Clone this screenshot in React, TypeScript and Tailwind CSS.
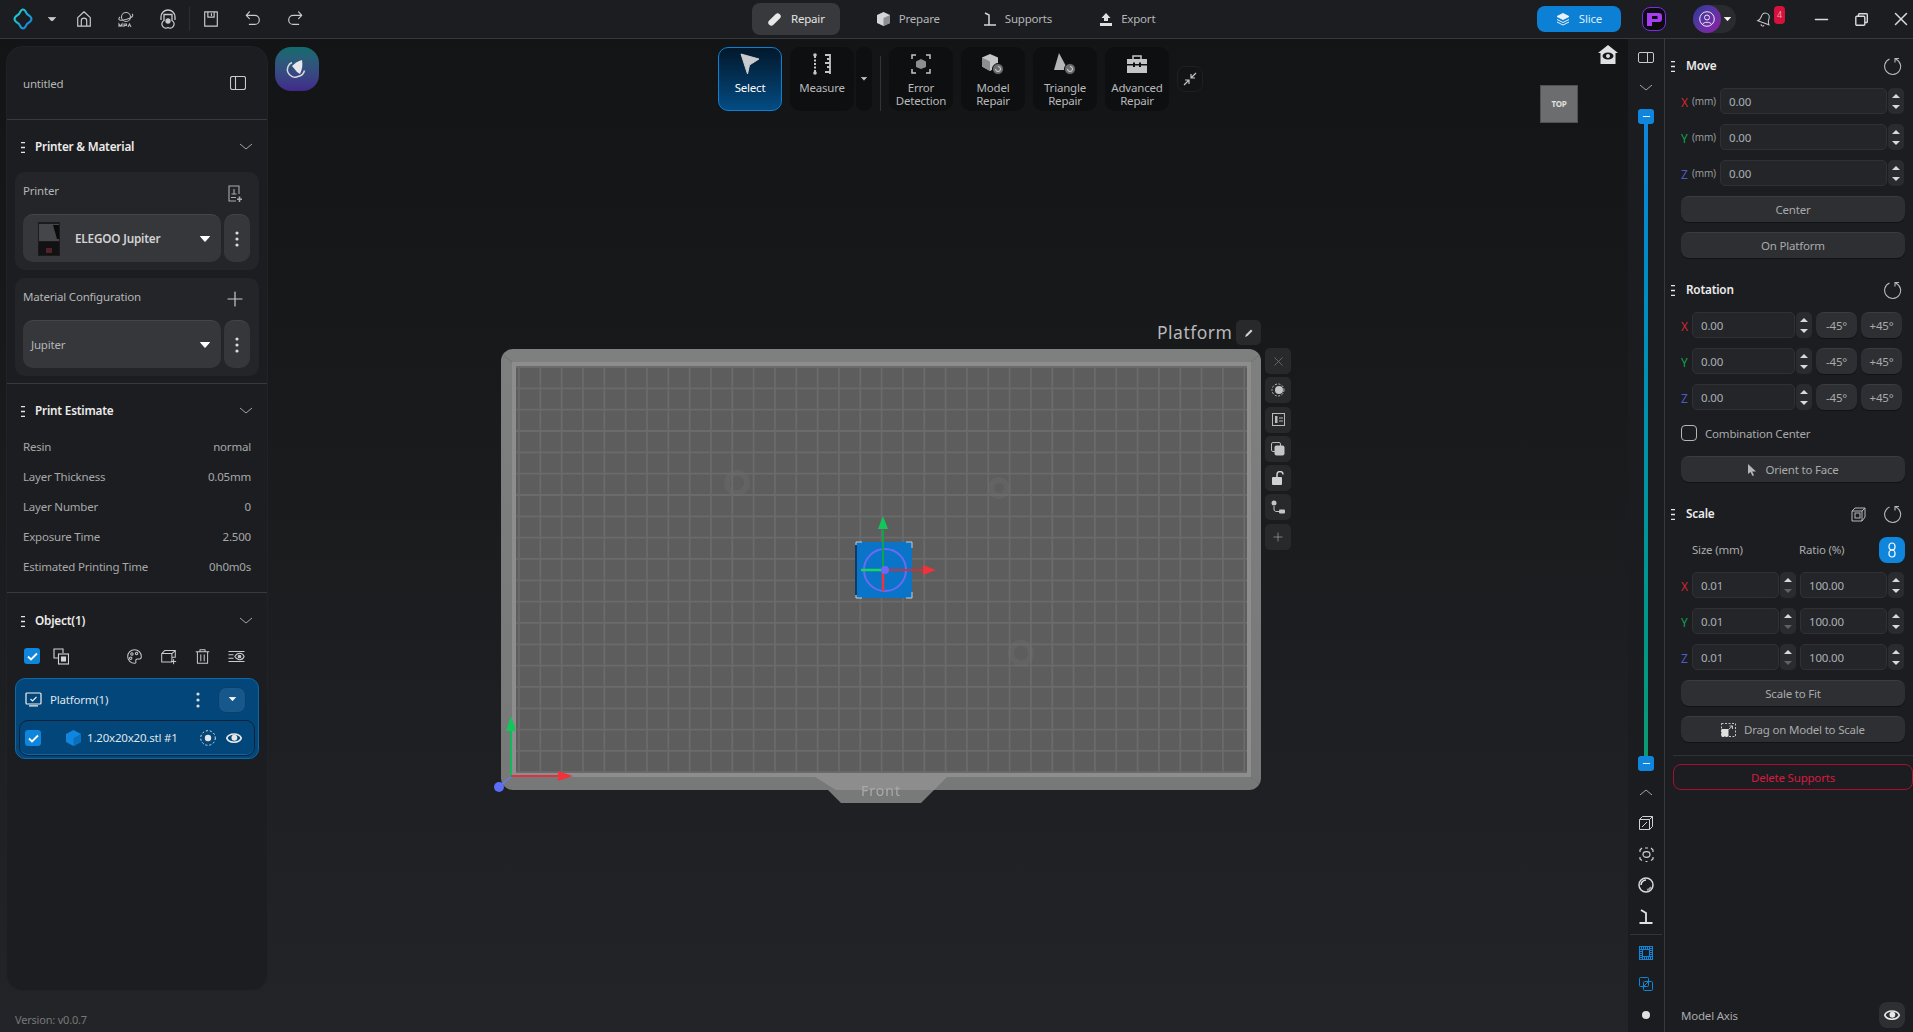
import React from 'react';
import { Minus, Plus, X } from 'lucide-react';

const Grip = () => (
    <svg width="4" height="11" viewBox="0 0 4 11" className="shrink-0">
        <path d="M0 0.5h4M0 5.5h4M0 10.5h4" stroke="#e5e5e5" strokeWidth="1.4" />
    </svg>
);

const Chevron = ({ up = false }: { up?: boolean }) => (
    <svg width="14" height="8" viewBox="0 0 14 8" className="shrink-0">
        <path d={up ? 'M1 7l6-5 6 5' : 'M1 1l6 5 6-5'} fill="none" stroke="#a3a4a6" strokeWidth="1" />
    </svg>
);

const Caret = ({ color = '#ffffff', size = 10 }: { color?: string; size?: number }) => (
    <svg width={size} height={size * 0.6} viewBox="0 0 10 6" className="shrink-0">
        <path d="M0.5 0.5h9L5 5.5z" fill={color} stroke={color} strokeLinejoin="round" />
    </svg>
);

const Kebab = () => (
    <svg width="4" height="16" viewBox="0 0 4 16">
        <circle cx="2" cy="2" r="1.6" fill="#dcdcdc" />
        <circle cx="2" cy="8" r="1.6" fill="#dcdcdc" />
        <circle cx="2" cy="14" r="1.6" fill="#dcdcdc" />
    </svg>
);

const EyeIcon = ({ w = 16 }: { w?: number }) => (
    <svg width={w} height={w * 0.64} viewBox="0 0 22 14" className="shrink-0">
        <path d="M1 7c3-7.500 17-7.500 20 0-3 7.500-17 7.500-20 0z" fill="none" stroke="#e8e8e8" strokeWidth="2.200" />
        <circle cx="11.500" cy="6.500" r="4" fill="#e8e8e8" />
    </svg>
);

const Reset = () => (
    <svg width="18" height="18" viewBox="0 0 18 18" fill="none" stroke="#b8b9bb" strokeWidth="1.1">
        <path d="M11.5 2A8 8 0 1 1 5.5 2.1" />
        <path d="M11 5.5V1.5H15" />
    </svg>
);

const Check = () => (
    <div className="flex h-4 w-4 shrink-0 items-center justify-center rounded-[3px] bg-[#0f85dc]">
        <svg width="11" height="9" viewBox="0 0 11 9">
            <path d="M1 4.5l3 3 6-6" fill="none" stroke="#fff" strokeWidth="1.8" />
        </svg>
    </div>
);

const Stroke = ({ children, size = 20, color = '#c9cacc', sw = 1.3 }: { children: React.ReactNode; size?: number; color?: string; sw?: number }) => (
    <svg width={size} height={size} viewBox="0 0 20 20" fill="none" stroke={color} strokeWidth={sw} strokeLinecap="round" strokeLinejoin="round" className="shrink-0">
        {children}
    </svg>
);

const TopSlot = ({ children }: { children: React.ReactNode }) => (
    <div className="flex h-full w-[42px] items-center justify-center">{children}</div>
);

const Tab = ({ label, icon, active, className = '' }: { label: string; icon: React.ReactNode; active?: boolean; className?: string }) => (
    <div className={`flex h-8 items-center gap-[9px] rounded-lg px-[15px] text-[11.5px] ${active ? 'bg-[#38393c] text-[#e4e4e4]' : 'text-[#b4b5b7]'} ${className}`}>
        {icon}
        <span>{label}</span>
    </div>
);

const ToolButton = ({ lines, icon, active }: { lines: string[]; icon: React.ReactNode; active?: boolean }) => (
    <div className={`flex h-16 w-16 shrink-0 flex-col items-center rounded-[10px] text-center text-[11.5px] leading-[13px] ${active ? 'border border-[#0f7fd0] bg-gradient-to-b from-[#02182c] to-[#034c84] pt-[3px] text-white' : 'bg-[#0e0f11] pt-1 text-[#b8b9bb]'}`}>
        <div className="flex h-[25px] items-center justify-center">{icon}</div>
        <div className="mt-[5px]">
            {lines.map(l => <div key={l}>{l}</div>)}
        </div>
    </div>
);

const SectionHeader = ({ title }: { title: string }) => (
    <div className="flex h-[26px] items-center pl-[6px] pr-[6px]">
        <Grip />
        <span className="ml-[10px] flex-1 text-[11.75px] font-semibold text-[#ececec]">{title}</span>
        <Chevron />
    </div>
);

const SelectBox = ({ children }: { children: React.ReactNode }) => (
    <div className="flex h-12 gap-[3px]">
        <div className="flex w-[198px] items-center rounded-[10px] border-t border-[#444548] bg-[#36373a] pl-2 pr-[11px]">
            {children}
            <Caret size={10} />
        </div>
        <div className="flex w-[26px] items-center justify-center rounded-[10px] border-t border-[#444548] bg-[#36373a]">
            <Kebab />
        </div>
    </div>
);

const EstimateRow = ({ label, value }: { label: string; value: string }) => (
    <div className="flex h-[30px] items-center justify-between text-[11.5px] text-[#a7a8aa]">
        <span>{label}</span>
        <span>{value}</span>
    </div>
);

const LeftPanel = () => (
    <div className="flex h-[943px] w-[260px] flex-col rounded-2xl bg-[#1c1d20] ring-1 ring-[#212225]">
        <div className="flex h-[73px] shrink-0 items-center justify-between border-b border-[#38393c] pl-4 pr-[21px]">
            <span className="pt-[2px] text-[11.5px] text-[#b4b5b7]">untitled</span>
            <svg width="16" height="14" viewBox="0 0 16 14" fill="none" stroke="#c9cacc" strokeWidth="1.1">
                <rect x="0.5" y="0.5" width="15" height="13" rx="2" />
                <path d="M5.5 0.5v13" />
            </svg>
        </div>
        <div className="flex shrink-0 flex-col border-b border-[#38393c] px-2 pb-[7px] pt-[14px]">
            <SectionHeader title="Printer & Material" />
            <div className="mt-3 h-[98px] rounded-[10px] bg-[#242528] pl-2 pt-2">
                <div className="flex h-[34px] items-start justify-between pr-[16px] text-[11.5px] leading-[22px] text-[#b4b5b7]">
                    <span>Printer</span>
                    <svg width="16" height="18" viewBox="0 0 16 18" fill="none" stroke="#a9aaac" strokeWidth="1.1" className="mt-[5px]">
                        <path d="M12 9V1H2v15h7M7 4v5M4.5 9h5M4 12.5h5" />
                        <path d="M12.5 11.5v5.5M10 14.2h5" strokeWidth="1.6" />
                    </svg>
                </div>
                <SelectBox>
                    <svg width="24" height="34" viewBox="0 0 24 34" className="ml-[6px] shrink-0">
                        <rect x="1" y="0" width="22" height="34" fill="#1b1b1d" />
                        <rect x="2" y="2" width="20" height="17" fill="#45464a" />
                        <path d="M16 3h6v14h-2z" fill="#0b0b0c" />
                        <rect x="2" y="20" width="20" height="13" fill="#121214" />
                        <rect x="9" y="26" width="6" height="5" fill="#532126" />
                    </svg>
                    <span className="ml-[14px] flex-1 text-[11.75px] font-semibold text-[#d2d3d5]">ELEGOO Jupiter</span>
                </SelectBox>
            </div>
            <div className="mt-2 h-[98px] rounded-[10px] bg-[#242528] pl-2 pt-2">
                <div className="flex h-[34px] items-start justify-between pr-[16px] text-[11.5px] leading-[22px] text-[#b4b5b7]">
                    <span>Material Configuration</span>
                    <Plus size={24} color="#c9cacc" strokeWidth={1.2} className="-mr-[4px] mt-px" />
                </div>
                <SelectBox>
                    <span className="flex-1 text-[11.5px] text-[#b4b5b7]">Jupiter</span>
                </SelectBox>
            </div>
        </div>
        <div className="flex shrink-0 flex-col border-b border-[#38393c] px-2 pb-[10px] pt-[14px]">
            <SectionHeader title="Print Estimate" />
            <div className="mt-[8px] pl-2 pr-2">
                <EstimateRow label="Resin" value="normal" />
                <EstimateRow label="Layer Thickness" value="0.05mm" />
                <EstimateRow label="Layer Number" value="0" />
                <EstimateRow label="Exposure Time" value="2.500" />
                <EstimateRow label="Estimated Printing Time" value="0h0m0s" />
            </div>
        </div>
        <div className="flex flex-col px-2 pt-[15px]">
            <SectionHeader title="Object(1)" />
            <div className="mt-[9px] flex h-[26px] items-center pl-[9px] pr-[14px]">
                <Check />
                <svg width="16" height="17" viewBox="0 0 16 17" fill="none" stroke="#d4d5d7" strokeWidth="1.1" className="ml-[13px]">
                    <path d="M10 5V1H1v9h4" />
                    <rect x="5.5" y="6" width="10" height="10" />
                    <rect x="8.5" y="9" width="4" height="4" fill="#d4d5d7" />
                </svg>
                <div className="ml-auto flex items-center gap-[17px]">
                    <Stroke size={17} color="#c9cacc" sw={1.2}>
                        <path d="M10 2a8 8 0 1 0 0 16c2 0 1.8-1.5 1.5-2.6-.4-1.5.6-2.4 2-2.4h2.5c1.5 0 2-1.5 2-3 0-4.5-3.500-8-8-8z" />
                        <circle cx="7" cy="7" r="1.4" />
                        <circle cx="12.500" cy="6.500" r="1.4" />
                        <circle cx="5.500" cy="12" r="1.4" />
                    </Stroke>
                    <Stroke size={17} color="#c9cacc" sw={1.2}>
                        <path d="M2 6.500h12v10H2zM2 6.500L5.500 3H18v8l-4 0M14 6.500L18 3" />
                        <path d="M16 13.500v5M13.500 16h5" />
                    </Stroke>
                    <Stroke size={17} color="#c9cacc" sw={1.2}>
                        <path d="M2.500 4.500h15M7 4.500V2h6v2.500M4 4.500V18h12V4.500M8 8v7M12 8v7" />
                    </Stroke>
                    <Stroke size={17} color="#c9cacc" sw={1.2}>
                        <path d="M1 4h18M1 16h18M1 8h5M1 12h5" />
                        <path d="M8 10c3-5 9-5 11 0-2 5-8 5-11 0z" />
                        <circle cx="13.500" cy="10" r="1.6" fill="#c9cacc" />
                    </Stroke>
                </div>
            </div>
            <div className="mt-[9px] flex h-[81px] flex-col rounded-[10px] border border-[#0a68ad] bg-[#03467a] px-[3px] pb-[2px]">
                <div className="flex h-[41px] items-center pl-[6px] pr-[9px]">
                    <svg width="17" height="15" viewBox="0 0 17 15" fill="none" stroke="#f0f0f0" strokeWidth="1.2" className="shrink-0">
                        <rect x="1" y="1" width="15" height="11" rx="1" />
                        <path d="M4 13.800h9M5.500 7l2 2 4-4" />
                    </svg>
                    <span className="ml-2 flex-1 pt-px text-[11.5px] text-[#dfe5ea]">Platform(1)</span>
                    <div className="mr-[18px]"><Kebab /></div>
                    <div className="flex h-[26px] w-7 items-center justify-center rounded-lg border border-[#0b3f6a] bg-[#17588c]">
                        <Caret size={7} />
                    </div>
                </div>
                <div className="flex h-9 items-center rounded-[9px] border border-[#0d2236] bg-[#03467a] pl-[5px] pr-3 shadow-[inset_0_-1px_0_#0a68ad]">
                    <Check />
                    <svg width="15" height="16" viewBox="0 0 15 16" className="ml-[25px] shrink-0">
                        <path d="M7.500 0L15 4v8l-7.500 4L0 12V4z" fill="#1186e0" />
                        <path d="M7.500 8L15 4v8l-7.500 4z" fill="#0a6fbc" />
                    </svg>
                    <span className="ml-[6px] flex-1 text-[11.5px] text-[#dfe5ea]">1.20x20x20.stl #1</span>
                    <svg width="16" height="16" viewBox="0 0 16 16" fill="none" className="shrink-0">
                        <circle cx="8" cy="8" r="7.300" stroke="#e5e5e5" strokeDasharray="2 2" />
                        <circle cx="8" cy="8" r="3.200" fill="#e5e5e5" />
                    </svg>
                    <div className="ml-[10px]"><EyeIcon /></div>
                </div>
            </div>
        </div>
    </div>
);

const ToolsBar = () => (
    <div className="flex items-start gap-2">
        <ToolButton active lines={['Select']} icon={
            <svg width="20" height="22" viewBox="0 0 20 22"><path d="M1 1l18 5-9.500 6L7.500 21z" fill="#c9cbce" stroke="#c9cbce" strokeLinejoin="round" /></svg>
        } />
        <div className="flex gap-[2px]">
            <ToolButton lines={['Measure']} icon={
                <svg width="20" height="22" viewBox="0 0 20 22" fill="none" stroke="#c4c5c7">
                    <path d="M3 3v16" strokeWidth="2" strokeDasharray="2 1.500" />
                    <circle cx="3" cy="2" r="1.800" fill="#c4c5c7" stroke="none" />
                    <circle cx="3" cy="20" r="1.800" fill="#c4c5c7" stroke="none" />
                    <path d="M18 1v20M13 2h5M15 6h3M13 10h5M15 14h3M13 19h5" strokeWidth="1.800" />
                </svg>
            } />
            <div className="flex h-16 w-4 items-center justify-center rounded-lg bg-[#0e0f11]"><Caret size={6} color="#c4c5c7" /></div>
        </div>
        <div className="mt-[9px] h-[55px] w-px bg-[#333437]" />
        <ToolButton lines={['Error', 'Detection']} icon={
            <svg width="20" height="20" viewBox="0 0 20 20" fill="none" stroke="#c4c5c7" strokeWidth="1.500">
                <path d="M1 5V1h4M15 1h4v4M19 15v4h-4M5 19H1v-4" />
                <path d="M10 5l5 2.500v5.500L10 15l-5-2V7.500z" fill="#8d8e90" stroke="none" />
            </svg>
        } />
        <ToolButton lines={['Model', 'Repair']} icon={
            <svg width="22" height="22" viewBox="0 0 22 22">
                <path d="M8 1l8 3.500v9L8 18l-8-4.500v-9z" fill="#c4c5c7" />
                <path d="M8 8.500v9.500L0 13.500v-9z" fill="#8d8e90" />
                <circle cx="16" cy="16" r="5.500" fill="#6d6e70" stroke="#0e0f11" />
                <path d="M13.500 16a2.500 2.500 0 1 0 2.500-2.500" fill="none" stroke="#d4d5d7" />
            </svg>
        } />
        <ToolButton lines={['Triangle', 'Repair']} icon={
            <svg width="22" height="22" viewBox="0 0 22 22">
                <path d="M5 0l9 17H0z" fill="#b5b6b8" />
                <circle cx="16" cy="16" r="5.500" fill="#6d6e70" stroke="#0e0f11" />
                <path d="M13.500 16a2.500 2.500 0 1 0 2.500-2.500" fill="none" stroke="#d4d5d7" />
            </svg>
        } />
        <ToolButton lines={['Advanced', 'Repair']} icon={
            <svg width="22" height="20" viewBox="0 0 22 20">
                <path d="M7 5V2h8v3" fill="none" stroke="#c4c5c7" strokeWidth="1.500" />
                <path d="M1 5h20v5h-6V8.500h-2V10H9V8.500H7V10H1z" fill="#c4c5c7" />
                <path d="M1 11.500h6V13h2v-1.500h4V13h2v-1.500h6V19H1z" fill="#c4c5c7" />
            </svg>
        } />
        <div className="mt-[19px] flex h-[26px] w-[26px] items-center justify-center rounded-lg border border-[#1f2023] bg-[#131416]">
            <svg width="14" height="14" viewBox="0 0 14 14" fill="none" stroke="#c4c5c7" strokeWidth="1.200">
                <path d="M13 1L8 6M8 2v4h4M1 13l5-5M2 8h4v4" />
            </svg>
        </div>
    </div>
);

const SceneButton = ({ children }: { children: React.ReactNode }) => (
    <div className="flex h-[26px] w-[26px] items-center justify-center rounded-[5px] bg-[#28292b]">{children}</div>
);

const Scene = () => {
    const gridX = Array.from({ length: 35 }, (_, i) => 519 + i * 21.33);
    const gridY = Array.from({ length: 20 }, (_, i) => 367 + i * 21.33);
    return (
        <svg className="absolute left-[490px] top-[301px] blur-[0.5px]" width="780" height="520" viewBox="490 340 780 520">
            <defs>
                <clipPath id="bed"><rect x="516" y="366" width="731" height="407" /></clipPath>
                <linearGradient id="rim" x1="0" y1="0" x2="0" y2="1">
                    <stop offset="0" stopColor="#7e7f7f" />
                    <stop offset="1" stopColor="#777878" />
                </linearGradient>
            </defs>
            <rect x="501" y="349" width="760" height="441" rx="12" fill="url(#rim)" />
            <path d="M503 355l9 7M1259 355l-8 7M503 784l9-7M1259 784l-8-7" stroke="#6f7070" strokeWidth="1" />
            <rect x="512" y="362" width="739" height="415" fill="#8c8d8c" />
            <rect x="516" y="366" width="731" height="407" fill="#5c5d5c" />
            <g clipPath="url(#bed)" stroke="#6a6b6a" strokeWidth="1.800">
                {gridX.map(x => <line key={x} x1={x} y1="366" x2={x} y2="773" />)}
                {gridY.map(y => <line key={y} x1="516" y1={y} x2="1247" y2={y} />)}
            </g>
            <g fill="none" stroke="#6f706f" strokeWidth="6" opacity="0.35">
                <circle cx="737" cy="483" r="10" />
                <circle cx="999" cy="488" r="8" />
                <circle cx="1021" cy="653" r="10" />
            </g>
            <path d="M815 777h132l-13 13h-98z" fill="#8c8d8c" />
            <path d="M828 790h106l-13 13h-80z" fill="#787979" />
            <text x="881" y="796" textAnchor="middle" fontSize="14" fill="#a9aaaa" letterSpacing="1">Front</text>

            <rect x="856" y="542" width="56" height="56" fill="#0a75c8" />
            <path d="M856 548v-6h6M906 542h6v6M912 592v6h-6M862 598h-6v-6" fill="none" stroke="#c8ccd0" strokeWidth="1" />
            <path d="M856 545v50" stroke="#0a3c66" strokeWidth="2" />
            <circle cx="885" cy="570" r="21" fill="none" stroke="#6a6af2" strokeWidth="2" />
            <path d="M883 570V530" stroke="#0fa34f" strokeWidth="2" />
            <path d="M883 516l-5 13h10z" fill="#10c85a" />
            <path d="M861 570h24" stroke="#1ad65f" strokeWidth="2.500" />
            <path d="M885 570h38" stroke="#c8323c" strokeWidth="2" />
            <path d="M936 570l-13-5v10z" fill="#f0323c" />
            <path d="M883 570v21" stroke="#f0323c" strokeWidth="2.500" />
            <circle cx="885" cy="570" r="4" fill="#6a6af2" />

            <path d="M511 778V730" stroke="#10b95a" strokeWidth="2" />
            <path d="M511 716l-5 15h10z" fill="#10c85a" />
            <path d="M511 776h48" stroke="#e0323c" strokeWidth="2" />
            <path d="M573 776l-15-5v10z" fill="#f0323c" />
            <path d="M511 777l-11 9" stroke="#6a7af2" strokeWidth="1.500" />
            <circle cx="499" cy="787" r="5" fill="#5b6ef5" />
        </svg>
    );
};

const Spinner = ({ dim = false }: { dim?: boolean }) => (
    <div className="flex h-[26px] w-4 shrink-0 flex-col items-center justify-center gap-[7px] rounded-[5px] bg-[#2a2b2e]">
        <svg width="8" height="4" viewBox="0 0 8 4"><path d="M4 0l4 4H0z" fill="#d8d9da" /></svg>
        <svg width="8" height="4" viewBox="0 0 8 4"><path d="M4 4L0 0h8z" fill={dim ? '#606164' : '#d8d9da'} /></svg>
    </div>
);

const Field = ({ value, className }: { value: string; className: string }) => (
    <div className={`flex h-[26px] items-center rounded-[5px] border border-[#303134] bg-[#242528] pl-2 pt-px text-[11.5px] text-[#a9b0b6] ${className}`}>{value}</div>
);

const AxisLabel = ({ axis }: { axis: string }) => {
    const color = axis === 'X' ? 'text-[#d0262f]' : axis === 'Y' ? 'text-[#0fa34f]' : 'text-[#4a5cc8]';
    return <span className={`text-[12px] ${color}`}>{axis}</span>;
};

const WideButton = ({ children }: { children: React.ReactNode }) => (
    <div className="flex h-[26px] w-[224px] items-center justify-center gap-2 rounded-lg border-t border-[#3b3c3f] bg-[#2e2f32] text-[11.5px] text-[#a9aaac] shadow-[0_1px_0_#111214]">{children}</div>
);

const SmallButton = ({ label }: { label: string }) => (
    <div className="flex h-[26px] w-[41px] items-center justify-center rounded-lg border-t border-[#3b3c3f] bg-[#2e2f32] text-[11.5px] text-[#a9aaac] shadow-[0_1px_0_#111214]">{label}</div>
);

const RightHeader = ({ title, children }: { title: string; children?: React.ReactNode }) => (
    <div className="-ml-[10px] flex h-[26px] items-center pr-[3px]">
        <Grip />
        <span className="ml-[11px] flex-1 text-[11.75px] font-semibold text-[#ececec]">{title}</span>
        {children}
        <Reset />
    </div>
);

const RightPanel = () => (
    <div className="flex w-[248px] shrink-0 flex-col bg-[#1c1d20] pb-[4px] pl-4 pr-2 pt-[14px]">
        <RightHeader title="Move" />
        <div className="mt-[9px] flex flex-col gap-[10px]">
            {['X', 'Y', 'Z'].map(axis => (
                <div key={axis} className="flex items-center">
                    <div className="w-[11px]"><AxisLabel axis={axis} /></div>
                    <span className="w-[28px] text-[10px] text-[#9a9b9d]">(mm)</span>
                    <Field value="0.00" className="w-[167px]" />
                    <div className="ml-px"><Spinner /></div>
                </div>
            ))}
            <WideButton>Center</WideButton>
            <WideButton>On Platform</WideButton>
        </div>
        <div className="mt-[19px]"><RightHeader title="Rotation" /></div>
        <div className="mt-[9px] flex flex-col gap-[10px]">
            {['X', 'Y', 'Z'].map(axis => (
                <div key={axis} className="flex items-center">
                    <div className="w-[11px]"><AxisLabel axis={axis} /></div>
                    <Field value="0.00" className="w-[103px]" />
                    <div className="ml-px"><Spinner /></div>
                    <div className="ml-1"><SmallButton label="-45°" /></div>
                    <div className="ml-1"><SmallButton label="+45°" /></div>
                </div>
            ))}
            <div className="flex h-[26px] items-center">
                <div className="h-4 w-4 rounded-[4px] border border-[#b5b6b8]" />
                <span className="ml-2 pt-px text-[11.5px] text-[#a9aaac]">Combination Center</span>
            </div>
            <WideButton>
                <svg width="10" height="13" viewBox="0 0 10 13"><path d="M1 1v10l2.500-2 2 4 1.500-.8-1.800-3.700H9z" fill="#b5b6b8" /></svg>
                Orient to Face
            </WideButton>
        </div>
        <div className="mt-[19px]">
            <RightHeader title="Scale">
                <svg width="15" height="15" viewBox="0 0 15 15" fill="none" stroke="#b8b9bb" strokeWidth="1" className="mr-[18px]">
                    <path d="M1 4h10v10H1zM1 4l3-3h10v9l-3 4M11 4l3-3" />
                    <rect x="4" y="6" width="5" height="5" />
                </svg>
            </RightHeader>
        </div>
        <div className="mt-[9px] flex h-[26px] items-center pt-px text-[11.5px] text-[#a9aaac]">
            <span className="ml-[11px] w-[107px]">Size (mm)</span>
            <span>Ratio (%)</span>
            <div className="ml-auto flex h-[26px] w-[26px] items-center justify-center rounded-lg bg-[#0f85dc]">
                <svg width="8" height="16" viewBox="0 0 8 16" fill="none" stroke="#fff" strokeWidth="1.200">
                    <rect x="1" y="1" width="6" height="7" rx="3" />
                    <rect x="1" y="8" width="6" height="7" rx="3" />
                </svg>
            </div>
        </div>
        <div className="mt-[10px] flex flex-col gap-[10px]">
            {['X', 'Y', 'Z'].map(axis => (
                <div key={axis} className="flex items-center">
                    <div className="w-[11px]"><AxisLabel axis={axis} /></div>
                    <Field value="0.01" className="w-[87px]" />
                    <div className="ml-px"><Spinner dim /></div>
                    <Field value="100.00" className="ml-1 w-[87px]" />
                    <div className="ml-px"><Spinner /></div>
                </div>
            ))}
            <WideButton>Scale to Fit</WideButton>
            <WideButton>
                <svg width="15" height="14" viewBox="0 0 15 14" fill="none" stroke="#c4c5c7" strokeWidth="1">
                    <path d="M0.500 0.500h14v13h-14z" strokeDasharray="2 1.500" />
                    <rect x="0.500" y="6" width="7" height="7.500" fill="#e0e0e0" stroke="none" />
                    <path d="M7.500 6.500l4-3.500M8.500 3h3v3" />
                </svg>
                Drag on Model to Scale
            </WideButton>
        </div>
        <div className="-ml-2 -mr-2 mt-[13px] h-px bg-[#303134]" />
        <div className="-ml-2 -mr-2 mt-2 flex h-[26px] items-center justify-center rounded-lg border border-[#a50f30] pt-px text-[11.5px] text-[#d81a42]">Delete Supports</div>
        <div className="mt-auto flex h-[26px] items-center justify-between text-[11.5px] text-[#a9aaac]">
            <span className="pt-px">Model Axis</span>
            <div className="flex h-[26px] w-[26px] items-center justify-center rounded-lg bg-[#2e2f32]"><EyeIcon /></div>
        </div>
    </div>
);

const StripSlot = ({ children }: { children: React.ReactNode }) => (
    <div className="flex h-[31px] w-full items-center justify-center">{children}</div>
);

const SliderHandle = () => (
    <div className="flex h-[15px] w-4 shrink-0 items-center justify-center rounded-[3px] bg-[#0f85dc]">
        <Minus size={11} color="#fff" strokeWidth={2} />
    </div>
);

const Strip = () => (
    <div className="flex w-[37px] shrink-0 flex-col items-center border-r border-[#38393c] bg-[#1b1c1f] pt-[2.5px]">
        <StripSlot>
            <svg width="16" height="11" viewBox="0 0 16 11" fill="none" stroke="#c9cacc" strokeWidth="1">
                <rect x="0.500" y="0.500" width="15" height="10" rx="1.500" />
                <path d="M9.500 0.500v10" />
            </svg>
        </StripSlot>
        <StripSlot><Chevron /></StripSlot>
        <div className="mt-[5.5px]"><SliderHandle /></div>
        <div className="h-[632px] w-1 shrink-0 bg-gradient-to-b from-[#0f85dc] to-[#0c9a72]" />
        <SliderHandle />
        <div className="mt-[5.5px] w-full">
            <StripSlot><Chevron up /></StripSlot>
        </div>
        <StripSlot>
            <svg width="14" height="14" viewBox="0 0 14 14" fill="none" stroke="#d0d1d3" strokeWidth="1">
                <path d="M0.500 3.500h10v10h-10zM0.500 3.500l3-3h10v10l-3 3M10.500 3.500l3-3M3 11l5-5" />
            </svg>
        </StripSlot>
        <StripSlot>
            <svg width="15" height="15" viewBox="0 0 15 15" fill="none" stroke="#d0d1d3" strokeWidth="1.200">
                <ellipse cx="7.500" cy="7.500" rx="3.500" ry="2.800" />
                <path d="M1 5V3l2-2M14 5V3l-2-2M1 10v2l2 1.500M14 10v2l-2 1.500M6 1h3M6.500 14.500h2" />
            </svg>
        </StripSlot>
        <StripSlot>
            <svg width="16" height="16" viewBox="0 0 16 16" fill="none">
                <circle cx="8" cy="8" r="7" stroke="#d8d9da" strokeWidth="1.500" />
                <path d="M3 8a5 5 0 0 1 5-5" stroke="#e8e8e8" strokeWidth="1.500" />
                <path d="M13 10a6 6 0 0 1-4 3" stroke="#9b9c9e" strokeWidth="2" />
            </svg>
        </StripSlot>
        <StripSlot>
            <svg width="14" height="15" viewBox="0 0 14 15" fill="none" stroke="#e0e1e2" strokeWidth="1.800">
                <path d="M2 1l5 3v9M0.500 14h13" />
            </svg>
        </StripSlot>
        <div className="mt-[2.5px] h-px w-[32px] shrink-0 bg-[#333437]" />
        <div className="mt-[2.5px] w-full">
            <StripSlot>
                <svg width="14" height="14" viewBox="0 0 14 14" fill="none" stroke="#0f85dc">
                    <rect x="0.500" y="0.500" width="13" height="13" strokeWidth="1" />
                    <rect x="2" y="2" width="10" height="10" strokeWidth="2" strokeDasharray="1 1" />
                    <rect x="3.500" y="3.500" width="7" height="7" fill="#1c1d20" strokeWidth="1" />
                </svg>
            </StripSlot>
        </div>
        <StripSlot>
            <svg width="14" height="14" viewBox="0 0 14 14" fill="none" stroke="#0f85dc" strokeWidth="1">
                <rect x="0.500" y="0.500" width="9" height="9" rx="1" />
                <rect x="4.500" y="4.500" width="9" height="9" rx="1" />
                <path d="M5 9l4-4" />
            </svg>
        </StripSlot>
        <StripSlot><div className="h-2 w-2 rounded-full bg-[#e0e0e0]" /></StripSlot>
    </div>
);

const Viewport = () => (
    <div className="relative flex min-w-0 flex-1 bg-gradient-to-b from-[#131416] to-[#232427] pl-[7px] pt-2">
        <div className="flex shrink-0 flex-col">
            <LeftPanel />
            <div className="ml-2 mt-[22px] text-[11px] text-[#77787a]">Version: v0.0.7</div>
        </div>
        <div className="ml-2 flex h-11 w-11 shrink-0 items-center justify-center rounded-2xl bg-gradient-to-b from-[#0f6c6e] to-[#41288c]">
            <svg width="24" height="24" viewBox="0 0 24 24" fill="none">
                <path d="M17 3c-4 1-7 3-10 6l5 6 3 2c2-4 3-9 2-14z" fill="#e8e8ea" />
                <path d="M7 5.500a7.500 7.500 0 1 0 6 14 8 8 0 0 0 6.500-6" stroke="#d8d9dd" strokeWidth="1.500" />
            </svg>
        </div>
        <div className="ml-[399px]"><ToolsBar /></div>

        <Scene />

        {/* overlays on the 3d view */}
        <div className="absolute left-[1157px] top-[281px] flex items-center gap-[6px]">
            <span className="w-[73px] text-[17.5px] leading-[25px] tracking-[0.5px] text-[#b7b8b8]">Platform</span>
            <div className="flex h-[25px] w-[25px] items-center justify-center rounded-[5px] bg-[#28292b]">
                <svg width="10" height="10" viewBox="0 0 10 10"><path d="M1 9l1-2.500L7 1.500 8.500 3l-5 5z" fill="#d0d0d0" /></svg>
            </div>
        </div>
        <div className="absolute left-[1265px] top-[309px] flex flex-col gap-[3.3px]">
            <SceneButton><X size={15} color="#77787a" strokeWidth={1.2} /></SceneButton>
            <SceneButton>
                <svg width="14" height="14" viewBox="0 0 14 14" fill="none"><circle cx="7" cy="7" r="6" stroke="#b8b9b9" strokeDasharray="2 1.500" /><circle cx="8" cy="7" r="4" fill="#c4c5c5" /></svg>
            </SceneButton>
            <SceneButton>
                <svg width="13" height="13" viewBox="0 0 13 13" fill="none" stroke="#b8b9b9"><rect x="0.500" y="0.500" width="12" height="12" /><rect x="3" y="3" width="2.500" height="7" fill="#b8b9b9" stroke="none" /><path d="M7 5h4M7 8h4" /></svg>
            </SceneButton>
            <SceneButton>
                <svg width="14" height="14" viewBox="0 0 14 14"><rect x="0.500" y="0.500" width="9" height="9" rx="1.500" fill="none" stroke="#b8b9b9" /><rect x="3.500" y="3.500" width="10" height="10" rx="2" fill="#c4c5c5" /></svg>
            </SceneButton>
            <SceneButton>
                <svg width="15" height="14" viewBox="0 0 15 14" fill="none"><rect x="1" y="6" width="10" height="8" rx="1" fill="#d0d1d1" /><path d="M9 6V3.500a3 3 0 0 1 6 0" stroke="#d0d1d1" strokeWidth="1.500" transform="translate(-3 0)" /></svg>
            </SceneButton>
            <SceneButton>
                <svg width="14" height="14" viewBox="0 0 14 14" fill="none"><circle cx="3" cy="3" r="2.500" fill="#c4c5c5" /><path d="M3 6v3c0 2 1 2.500 3 2.500h2" stroke="#c4c5c5" /><rect x="8" y="9.500" width="6" height="4" rx="1" fill="#c4c5c5" /></svg>
            </SceneButton>
            <SceneButton><Plus size={14} color="#b8b9b9" strokeWidth={1} /></SceneButton>
        </div>
        <div className="absolute left-[1598px] top-[6px]">
            <svg width="20" height="19" viewBox="0 0 20 19">
                <path d="M10 0L0 8h2.500v11h15V8H20z" fill="#e0e1e1" />
                <ellipse cx="10" cy="11" rx="5.500" ry="3.500" fill="#16171a" />
                <circle cx="10" cy="11" r="2" fill="#e0e1e1" />
            </svg>
        </div>
        <div className="absolute left-[1540px] top-[46px] flex h-[38px] w-[38px] items-center justify-center border border-[#505153] bg-[#6c6d6e] text-[8px] font-bold text-[#e0e0e0]">TOP</div>
    </div>
);

const TopBar = () => (
    <div className="flex h-[39px] shrink-0 items-center border-b border-[#38393c] bg-[#1c1d20]">
        <svg width="20" height="22" viewBox="0 0 20 22" fill="none" className="ml-[13px] shrink-0">
            <defs>
                <linearGradient id="logo" x1="0" y1="0" x2="1" y2="1">
                    <stop offset="0" stopColor="#1fe0c8" />
                    <stop offset="1" stopColor="#1476e8" />
                </linearGradient>
            </defs>
            <path d="M10 1.500c2.500 0 3 3.500 4 4.500s4.500 2.500 4.500 5-3.500 4-4.500 5-1.500 4.500-4 4.500-3-3.500-4-4.500-4.500-2.500-4.500-5S5 7 6 6s1.500-4.500 4-4.500z" stroke="url(#logo)" strokeWidth="2" />
        </svg>
        <div className="ml-[15px] mr-[7px]"><Caret size={8} color="#c9cacc" /></div>
        <TopSlot>
            <Stroke size={18}><path d="M3 8.500L10 2l7 6.500V18H3zM7 18v-6a3 3 0 0 1 6 0v6" /></Stroke>
        </TopSlot>
        <TopSlot>
            <svg width="20" height="20" viewBox="0 0 20 20" fill="none" stroke="#b8b9bb" strokeWidth="1.100">
                <circle cx="10" cy="8" r="4.500" />
                <path d="M4 8c-3 3 0 4 6 2.500s8-4 6-5.500" />
                <path d="M3 18v-3l1.500 2 1.500-2v3M8 18v-3h2.500v1.500H8M12 18l1.500-3 1.500 3" />
            </svg>
        </TopSlot>
        <TopSlot>
            <svg width="20" height="20" viewBox="0 0 20 20" fill="none" stroke="#c9cacc" strokeWidth="1.300">
                <path d="M3 11V8a7 7 0 0 1 14 0v3" />
                <path d="M6 5.500h8v6a4 4 0 0 1-4 7 4 4 0 0 1-4-7z" fill="#1c1d20" />
                <circle cx="10" cy="12" r="2" fill="#c9cacc" />
            </svg>
        </TopSlot>
        <div className="h-6 w-px bg-[#2d2e31]" />
        <TopSlot>
            <Stroke size={18}><path d="M3 2h14v16H3zM6.500 2v6h7V2M10.500 4v2" /></Stroke>
        </TopSlot>
        <TopSlot>
            <Stroke size={18}><path d="M6 2L2.500 6 6 9.500M3 6h9a4.500 4.500 0 0 1 0 10H6" /></Stroke>
        </TopSlot>
        <TopSlot>
            <Stroke size={18}><path d="M14 2l3.500 4L14 9.500M17 6H8a4.500 4.500 0 0 0 0 10h6" /></Stroke>
        </TopSlot>

        <Tab active className="ml-[436px]" label="Repair" icon={
            <svg width="15" height="15" viewBox="0 0 15 15"><rect x="0" y="4.500" width="15" height="6" rx="3" fill="#e8e8e8" transform="rotate(-45 7.500 7.500)" /></svg>
        } />
        <Tab className="ml-[22px]" label="Prepare" icon={
            <svg width="13" height="14" viewBox="0 0 13 14"><path d="M6.500 0L13 3v8l-6.500 3L0 11V3z" fill="#d4d5d7" /><path d="M6.500 6L13 3v8l-6.500 3z" fill="#8d8e90" /></svg>
        } />
        <Tab className="ml-[14px]" label="Supports" icon={
            <svg width="12" height="14" viewBox="0 0 12 14" fill="none" stroke="#d4d5d7" strokeWidth="1.500"><path d="M1 1l4 2v10M0 13h12" /></svg>
        } />
        <Tab className="ml-[18px]" label="Export" icon={
            <svg width="12" height="13" viewBox="0 0 12 13"><path d="M6 0l4.500 5H8v3H4V5H1.500zM0 10h12v3H0z" fill="#e0e0e0" /></svg>
        } />

        <div className="ml-auto flex h-[26px] w-[84px] items-center justify-center gap-[9px] rounded-lg bg-[#0c80d4] text-[11.5px] text-[#dfeefa]">
            <svg width="14" height="13" viewBox="0 0 14 13" fill="none" stroke="#e8f2fa">
                <path d="M7 0.500l6 3-6 3-6-3z" fill="#e8f2fa" />
                <path d="M1 6.500l6 3 6-3M1 9l6 3 6-3" />
            </svg>
            Slice
        </div>
        <div className="ml-[21px] flex h-6 w-6 items-center justify-center rounded-lg border border-[#7a2ee8] bg-[#0b0b10]">
            <svg width="15" height="13" viewBox="0 0 15 13"><path d="M0 0h12a3 3 0 0 1 3 3v3a3 3 0 0 1-3 3H5v4H0z" fill="#a63df0" /><rect x="5" y="3" width="5.500" height="3" fill="#0b0b10" /></svg>
        </div>
        <div className="ml-[27px] flex h-7 w-[43px] items-center rounded-full bg-[#2a2b2e]">
            <div className="flex h-7 w-7 items-center justify-center rounded-full bg-gradient-to-br from-[#203a9c] to-[#8e16a8]">
                <svg width="16" height="16" viewBox="0 0 16 16" fill="none" stroke="#f0e8f8" strokeWidth="1">
                    <circle cx="8" cy="8" r="7.300" />
                    <circle cx="8" cy="6.500" r="2.500" />
                    <path d="M3.500 13.500c1-3 8-3 9 0" />
                </svg>
            </div>
            <div className="ml-[3px]"><Caret size={7} /></div>
        </div>
        <div className="relative ml-[21px] flex h-full w-[44px] items-center">
            <svg width="15" height="15" viewBox="0 0 15 15" fill="none" stroke="#c9cacc" strokeWidth="1" transform="rotate(20)">
                <path d="M7.500 1c3 0 4 2 4 5s2 5 2 5H1.500s2-2 2-5 1-5 4-5zM6 13a1.500 1.500 0 0 0 3 0" />
            </svg>
            <div className="absolute left-[17px] top-[6px] flex h-[18px] w-[11px] items-center justify-center rounded-[4px] bg-[#d8103c] text-[9px] text-[#e8a0b0]">4</div>
        </div>
        <div className="flex h-full w-10 items-center justify-center"><Minus size={21} color="#d8d9da" strokeWidth={1.5} /></div>
        <div className="flex h-full w-10 items-center justify-center">
            <svg width="13" height="13" viewBox="0 0 13 13" fill="none" stroke="#d8d9da" strokeWidth="1.400">
                <rect x="0.800" y="3.200" width="9" height="9" rx="1" />
                <path d="M3.500 3V1.500a.8.8 0 0 1 .8-.8h7.200a.8.8 0 0 1 .8.800v7.200a.8.8 0 0 1-.8.800H10" />
            </svg>
        </div>
        <div className="flex h-full w-8 items-center pl-[9px]"><X size={22} color="#d8d9da" strokeWidth={1.6} /></div>
    </div>
);

export default function App() {
    return (
        <div className="flex h-[1032px] w-[1913px] flex-col overflow-hidden bg-[#1c1d20] font-['Noto_Sans',sans-serif] tracking-[-0.2px]">
            <TopBar />
            <div className="flex min-h-0 flex-1">
                <Viewport />
                <Strip />
                <RightPanel />
            </div>
        </div>
    );
}
